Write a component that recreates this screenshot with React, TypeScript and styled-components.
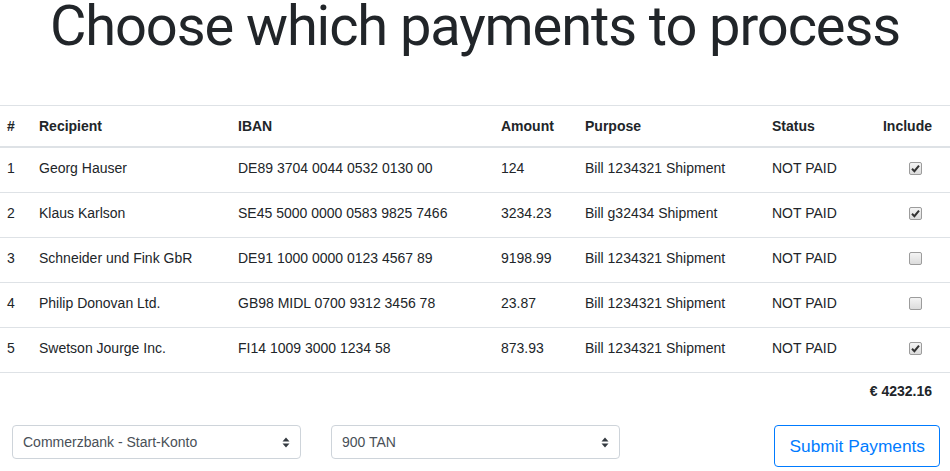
import React, { useState } from "react";
import styled, { createGlobalStyle } from "styled-components";

const GlobalStyle = createGlobalStyle`
  html, body {
    margin: 0;
    padding: 0;
    background: #fff;
    overflow: hidden;
  }
  body {
    font-family: "Liberation Sans", Arial, sans-serif;
    color: #212529;
    font-size: 14px;
  }
`;

interface Payment {
  recipient: string;
  iban: string;
  amount: string;
  purpose: string;
  status: string;
  include: boolean;
}

const payments: Payment[] = [
  { recipient: "Georg Hauser", iban: "DE89 3704 0044 0532 0130 00", amount: "124", purpose: "Bill 1234321 Shipment", status: "NOT PAID", include: true },
  { recipient: "Klaus Karlson", iban: "SE45 5000 0000 0583 9825 7466", amount: "3234.23", purpose: "Bill g32434 Shipment", status: "NOT PAID", include: true },
  { recipient: "Schneider und Fink GbR", iban: "DE91 1000 0000 0123 4567 89", amount: "9198.99", purpose: "Bill 1234321 Shipment", status: "NOT PAID", include: false },
  { recipient: "Philip Donovan Ltd.", iban: "GB98 MIDL 0700 9312 3456 78", amount: "23.87", purpose: "Bill 1234321 Shipment", status: "NOT PAID", include: false },
  { recipient: "Swetson Jourge Inc.", iban: "FI14 1009 3000 1234 58", amount: "873.93", purpose: "Bill 1234321 Shipment", status: "NOT PAID", include: true },
];

const Page = styled.div`
  width: 950px;
`;

const Title = styled.h1`
  margin: 0 0 53px;
  font-family: Roboto, "Liberation Sans", sans-serif;
  font-weight: 400;
  font-size: 56px;
  letter-spacing: -1.1px;
  line-height: 52px;
  text-align: center;
  color: #212529;
`;

const Table = styled.table`
  width: 100%;
  border-collapse: collapse;
  table-layout: fixed;
  border-top: 1px solid #dee2e6;
`;

const Th = styled.th<{ $w?: number; $right?: boolean }>`
  box-sizing: border-box;
  ${({ $w }) => ($w ? `width: ${$w}px;` : "")}
  text-align: ${({ $right }) => ($right ? "right" : "left")};
  font-weight: 700;
  line-height: 20px;
  padding: 10px ${({ $right }) => ($right ? "18px" : "7px")} 10px 7px;
  border-bottom: 2px solid #dee2e6;
`;

const Td = styled.td<{ $right?: boolean }>`
  box-sizing: border-box;
  line-height: 20px;
  padding: 10px ${({ $right }) => ($right ? "28px" : "7px")} 14px 7px;
  border-bottom: 1px solid #dee2e6;
  text-align: ${({ $right }) => ($right ? "right" : "left")};
  white-space: nowrap;
`;

const CheckBox = styled.span`
  display: inline-flex;
  align-items: center;
  justify-content: center;
  width: 11px;
  height: 11px;
  border: 1px solid #9c9c9c;
  border-radius: 2px;
  background: linear-gradient(#f4f4f4, #dcdcdc);
  vertical-align: middle;
  cursor: pointer;
  margin-top: -2px;
`;

const Total = styled.div`
  text-align: right;
  font-weight: 700;
  line-height: 20px;
  padding: 8px 18px 0 0;
`;

const Controls = styled.div`
  display: flex;
  align-items: flex-start;
  gap: 30px;
  padding: 24px 10px 0 12px;
`;

const SelectBox = styled.div<{ $w: number }>`
  width: ${({ $w }) => $w}px;
  height: 34px;
  box-sizing: border-box;
  border: 1px solid #ced4da;
  border-radius: 4px;
  display: flex;
  align-items: center;
  padding: 0 10px;
  color: #495057;
  font-size: 14px;
`;

const SelectText = styled.span`
  flex: 1;
`;

const Button = styled.button`
  margin-left: auto;
  height: 42px;
  box-sizing: border-box;
  padding: 0 14px 0 15px;
  border: 1px solid #007bff;
  border-radius: 4px;
  background: #fff;
  color: #007bff;
  font-family: "Liberation Sans", Arial, sans-serif;
  font-size: 17.3px;
  cursor: pointer;
`;

const Arrows = () => (
  <svg width="8" height="11" viewBox="0 0 8 11">
    <path d="M4 0.5 L7.5 4.5 H0.5 Z" fill="#343a40" />
    <path d="M4 10.5 L7.5 6.5 H0.5 Z" fill="#343a40" />
  </svg>
);

const Check = () => (
  <svg width="9" height="9" viewBox="0 0 9 9">
    <path d="M1 4.8 L3.4 7.2 L8 1.6" stroke="#333" strokeWidth="2" fill="none" />
  </svg>
);

const Select = ({ value, width }: { value: string; width: number }) => (
  <SelectBox $w={width}>
    <SelectText>{value}</SelectText>
    <Arrows />
  </SelectBox>
);

export default function App() {
  const [rows, setRows] = useState(payments);
  const toggle = (i: number) =>
    setRows(rows.map((r, j) => (j === i ? { ...r, include: !r.include } : r)));

  return (
    <Page>
      <GlobalStyle />
      <Title>Choose which payments to process</Title>
      <Table>
        <thead>
          <tr>
            <Th $w={32}>#</Th>
            <Th $w={199}>Recipient</Th>
            <Th $w={263}>IBAN</Th>
            <Th $w={84}>Amount</Th>
            <Th $w={187}>Purpose</Th>
            <Th $w={105}>Status</Th>
            <Th $right>Include</Th>
          </tr>
        </thead>
        <tbody>
          {rows.map((p, i) => (
            <tr key={i}>
              <Td>{i + 1}</Td>
              <Td>{p.recipient}</Td>
              <Td>{p.iban}</Td>
              <Td>{p.amount}</Td>
              <Td>{p.purpose}</Td>
              <Td>{p.status}</Td>
              <Td $right>
                <CheckBox onClick={() => toggle(i)}>
                  {p.include && <Check />}
                </CheckBox>
              </Td>
            </tr>
          ))}
        </tbody>
      </Table>
      <Total>€ 4232.16</Total>
      <Controls>
        <Select value="Commerzbank - Start-Konto" width={289} />
        <Select value="900 TAN" width={289} />
        <Button>Submit Payments</Button>
      </Controls>
    </Page>
  );
}
